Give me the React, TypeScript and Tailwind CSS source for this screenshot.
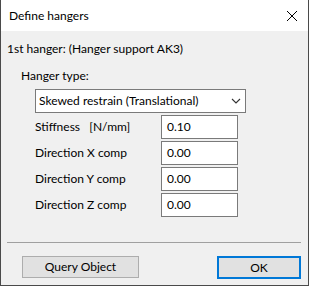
import React from "react";

function Row({ label, value }: { label: React.ReactNode; value: string }) {
  return (
    <div className="flex items-center h-[24px]">
      <div className="w-[126px] text-[12px] leading-[16px] text-black whitespace-pre">{label}</div>
      <div className="w-[77px] h-[24px] border border-[#7a7a7a] bg-white flex items-center pl-[5px] text-[12px] leading-[16px] text-black">
        {value}
      </div>
    </div>
  );
}

export default function App() {
  return (
    <div className="font-['Lato',_'Noto_Sans',_sans-serif] w-[309px] h-[286px] bg-[#f0f0f0] border border-t-0 border-[#4a4a4a] flex flex-col select-none">
      <div className="h-[31px] bg-white flex items-center justify-between pl-[8px] pr-[10px] shrink-0">
        <span className="text-[12px] leading-[16px] text-black">Define hangers</span>
        <svg width="12" height="12" viewBox="0 0 12 12">
          <path d="M1 1 L11 11 M11 1 L1 11" stroke="#000" strokeWidth="1" fill="none" />
        </svg>
      </div>
      <div className="flex flex-col pl-[6px] pr-[6px]">
        <div className="mt-[10px] text-[12px] leading-[16px] text-black">1st hanger: (Hanger support AK3)</div>
        <div className="mt-[11px] ml-[14px] text-[12px] leading-[16px] text-black">Hanger type:</div>
        <div className="mt-[5px] ml-[28px] w-[211px] h-[24px] border border-[#7a7a7a] bg-white flex items-center justify-between pl-[3px] pr-[4px]">
          <span className="text-[12px] leading-[16px] text-black">Skewed restrain (Translational)</span>
          <svg width="10" height="6" viewBox="0 0 10 6">
            <path d="M1 1 L5 5 L9 1" stroke="#333" strokeWidth="1.1" fill="none" />
          </svg>
        </div>
        <div className="mt-[2px] ml-[28px] flex flex-col gap-[2px]">
          <Row label={"Stiffness   [N/mm]"} value="0.10" />
          <Row label="Direction X comp" value="0.00" />
          <Row label="Direction Y comp" value="0.00" />
          <Row label="Direction Z comp" value="0.00" />
        </div>
        <div className="mt-[25px] h-[1px] bg-[#a0a0a0] w-[294px]" />
        <div className="mt-[13px] flex justify-between pl-[15px] pr-[1px]">
          <div className="w-[117px] h-[22px] bg-[#e1e1e1] border border-[#adadad] flex items-center justify-center text-[12px] leading-[16px] text-black">
            Query Object
          </div>
          <div className="w-[84px] h-[23px] bg-[#e1e1e1] border-2 border-[#0078d7] flex items-center justify-center text-[12px] leading-[16px] text-black">
            OK
          </div>
        </div>
      </div>
    </div>
  );
}
